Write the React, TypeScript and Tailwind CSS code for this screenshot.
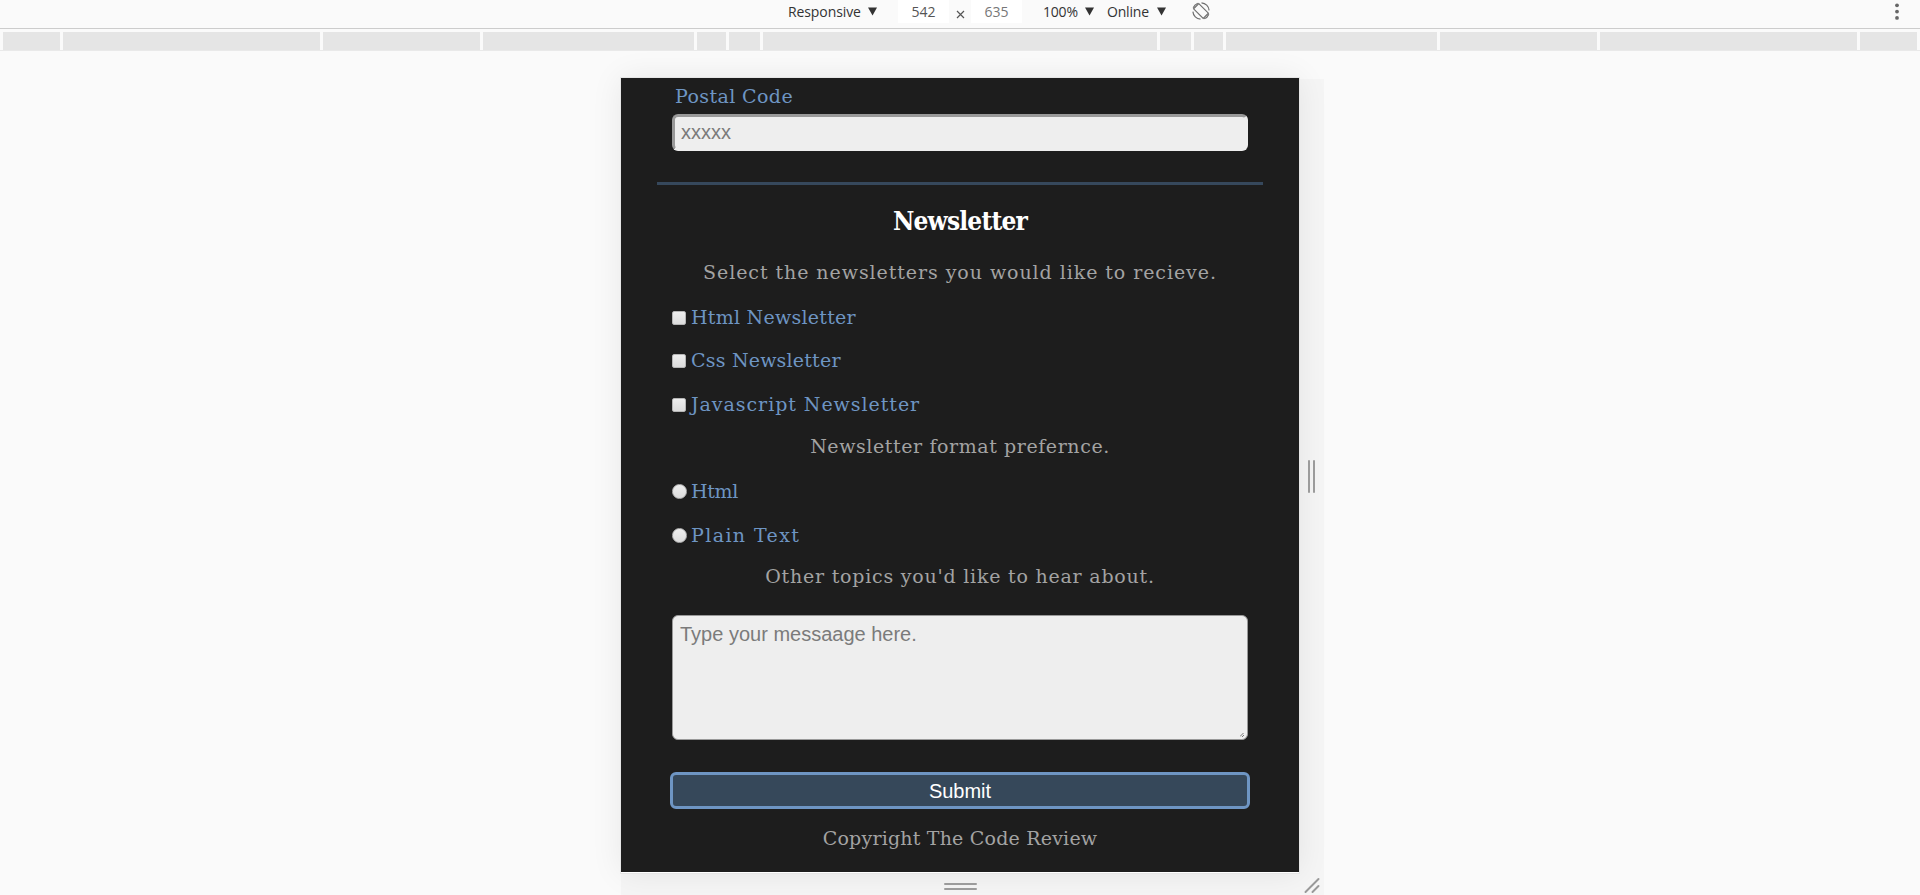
import type { ReactNode } from "react";

const ruler = [
  "ml-[3px] w-[57px]",
  "ml-[3px] w-[257px]",
  "ml-[3px] w-[157px]",
  "ml-[3px] w-[211px]",
  "ml-[3px] w-[29px]",
  "ml-[3px] w-[31px]",
  "ml-[3px] w-[394px]",
  "ml-[3px] w-[31px]",
  "ml-[3px] w-[29px]",
  "ml-[3px] w-[211px]",
  "ml-[3px] w-[157px]",
  "ml-[3px] w-[257px]",
  "ml-[3px] w-[57px]",
];

function Caret({ className }: { className: string }) {
  return (
    <svg className={`h-[9px] w-[9px] shrink-0 ${className}`} viewBox="0 0 9 9">
      <path d="M0 0.5h9L4.5 8.5z" fill="#333" />
    </svg>
  );
}

function Toolbar() {
  return (
    <header className="flex h-[29px] items-start border-b border-[#ccc] pl-[788px] font-['Open_Sans',sans-serif] text-[14px] leading-[24px] text-[#333]">
      <span className="w-[80px] tracking-[-0.1px]">Responsive</span>
      <Caret className="mt-[7px]" />
      <span className="ml-[21px] h-[23px] w-[51px] bg-white text-center text-[#555]">542</span>
      <svg className="mt-[10px] ml-[7px] h-[9px] w-[9px] shrink-0" viewBox="0 0 9 9">
        <path d="M1 1l7 7M8 1L1 8" stroke="#555" strokeWidth="1.2" />
      </svg>
      <span className="ml-[6px] h-[23px] w-[51px] bg-white text-center text-[#777]">635</span>
      <span className="ml-[21px] w-[42px] tracking-[-0.2px]">100%</span>
      <Caret className="mt-[7px]" />
      <span className="ml-[13px] w-[50px] tracking-[-0.2px]">Online</span>
      <Caret className="mt-[7px]" />
      <svg
        className="mt-[2px] ml-[26px] h-[18px] w-[18px] shrink-0"
        viewBox="0 0 18 18"
        fill="none"
        stroke="#6e6e6e"
        strokeWidth="1.2"
      >
        <path d="M6.8 1.6L16.4 11.2l-5.2 5.2L1.6 6.8z" />
        <path d="M9.5 .8a8.2 8.2 0 0 1 7.6 7.6M8.5 17.2A8.2 8.2 0 0 1 .9 9.6" />
        <path d="M1.2 5.8A8.2 8.2 0 0 1 5.8 1.2M16.8 12.2a8.2 8.2 0 0 1-4.6 4.6" />
      </svg>
      <svg className="mt-[2px] mr-[20px] ml-auto h-[20px] w-[6px] shrink-0" viewBox="0 0 6 20" fill="#666">
        <circle cx="3" cy="3.3" r="1.9" />
        <circle cx="3" cy="9.6" r="1.9" />
        <circle cx="3" cy="15.9" r="1.9" />
      </svg>
    </header>
  );
}

function Prompt({ className, children }: { className: string; children: ReactNode }) {
  return <p className={`h-6 text-center whitespace-nowrap text-[#a3a3a3] ${className}`}>{children}</p>;
}

function Choice({ className, round, children }: { className: string; round?: boolean; children: ReactNode }) {
  return (
    <label className={`flex h-6 items-start pl-[51px] whitespace-nowrap text-[#6e95c3] ${className}`}>
      <span
        className={
          round
            ? "mt-[5px] mr-[4px] size-[15px] rounded-full border border-[#b5b5b5] bg-linear-to-b from-[#eee] to-[#dcdcdc]"
            : "mt-[6px] mr-[5px] size-[14px] rounded-[2px] border border-[#b5b5b5] bg-linear-to-b from-[#eee] to-[#dcdcdc]"
        }
      />
      {children}
    </label>
  );
}

function NewsletterForm() {
  return (
    <main className="h-[794px] w-[678px] bg-[#1d1d1d] pt-[6px] font-['DejaVu_Serif',serif] text-[19px] leading-6">
      <label className="block h-6 pl-[54px] tracking-[0.4px] text-[#6e95c3]">Postal Code</label>
      <div className="mt-[6px] ml-[51px] h-[37px] w-[576px] rounded-[6px] border-3 border-t-[#999] border-r-[#eee] border-b-[#eee] border-l-[#999] bg-[#eee] pl-[6px] font-['Liberation_Sans',sans-serif] text-[20px] leading-[31px] text-[#7b7b7b]">
        xxxxx
      </div>
      <div className="mx-[36px] mt-[31px] h-[3px] bg-[#36485c]" />
      <h2 className="mt-[20px] h-8 text-center font-['DejaVu_Serif_Condensed','DejaVu_Serif',serif] text-[26px] leading-8 font-bold tracking-[-0.8px] text-white">
        Newsletter
      </h2>
      <Prompt className="mt-[23px] tracking-[0.93px]">Select the newsletters you would like to recieve.</Prompt>
      <Choice className="mt-[21px] tracking-[0.25px]">Html Newsletter</Choice>
      <Choice className="mt-[19px] tracking-[0.2px]">Css Newsletter</Choice>
      <Choice className="mt-[20px] tracking-[0.95px]">Javascript Newsletter</Choice>
      <Prompt className="mt-[18px] tracking-[0.58px]">Newsletter format prefernce.</Prompt>
      <Choice round className="mt-[21px] tracking-[-0.3px]">Html</Choice>
      <Choice round className="mt-[20px] tracking-[1.4px]">Plain Text</Choice>
      <Prompt className="mt-[17px] tracking-[0.77px]">Other topics you'd like to hear about.</Prompt>
      <div className="mt-[27px] ml-[51px] flex h-[125px] w-[576px] justify-between rounded-[6px] border border-[#999] bg-[#eee] pt-[3px] pl-[7px] font-['Liberation_Sans',sans-serif] text-[20px] leading-[31px] text-[#7b7b7b]">
        Type your messaage here.
        <svg className="mr-[3px] mb-[2px] h-[4px] w-[4px] self-end" viewBox="0 0 4 4">
          <path d="M0 3.5L3.5 0M2 4l2-2" stroke="#555" strokeWidth=".8" />
        </svg>
      </div>
      <button className="mt-[32px] ml-[49px] block h-[37px] w-[580px] rounded-[6px] border-3 border-[#6e95c3] bg-[#36485a] pt-px text-center font-['Liberation_Sans',sans-serif] text-[20px] leading-[30px] text-white">
        Submit
      </button>
      <Prompt className="mt-[17px] tracking-[0.2px]">Copyright The Code Review</Prompt>
    </main>
  );
}

export default function App() {
  return (
    <div className="h-[895px] w-[1920px] overflow-hidden bg-[#fafafa]">
      <Toolbar />
      <div className="mt-[3px] flex h-[19px] border-b border-[#e9e9e9]">
        {ruler.map((size, i) => (
          <span key={i} className={`h-[18px] shrink-0 bg-[#e5e5e5] ${size}`} />
        ))}
      </div>
      <div className="mt-[27px] ml-[621px] grid w-[703px] grid-cols-[678px_25px] grid-rows-[795px_22px]">
        <div className="z-10 bg-white shadow-[0_0_0_1px_#e6e6e6,0_0_30px_rgba(0,0,0,0.08)]">
          <NewsletterForm />
        </div>
        <div className="mt-px flex items-start justify-center gap-[3px] bg-[#f5f5f5] pt-[381px]">
          <span className="z-20 h-[33px] w-[2px] rounded bg-[#9b9b9b]" />
          <span className="z-20 h-[33px] w-[2px] rounded bg-[#9b9b9b]" />
        </div>
        <div className="flex flex-col items-center gap-[3px] bg-[#f5f5f5] pt-[10px]">
          <span className="z-20 h-[2px] w-[33px] rounded bg-[#9b9b9b]" />
          <span className="z-20 h-[2px] w-[33px] rounded bg-[#9b9b9b]" />
        </div>
        <div className="bg-[#f5f5f5] pt-[4px] pl-[5px]">
          <svg className="h-[17px] w-[17px]" viewBox="0 0 17 17" stroke="#999" strokeWidth="2" strokeLinecap="round">
            <path d="M1.5 15L14.5 2M8.5 15L14.5 9" />
          </svg>
        </div>
      </div>
    </div>
  );
}
